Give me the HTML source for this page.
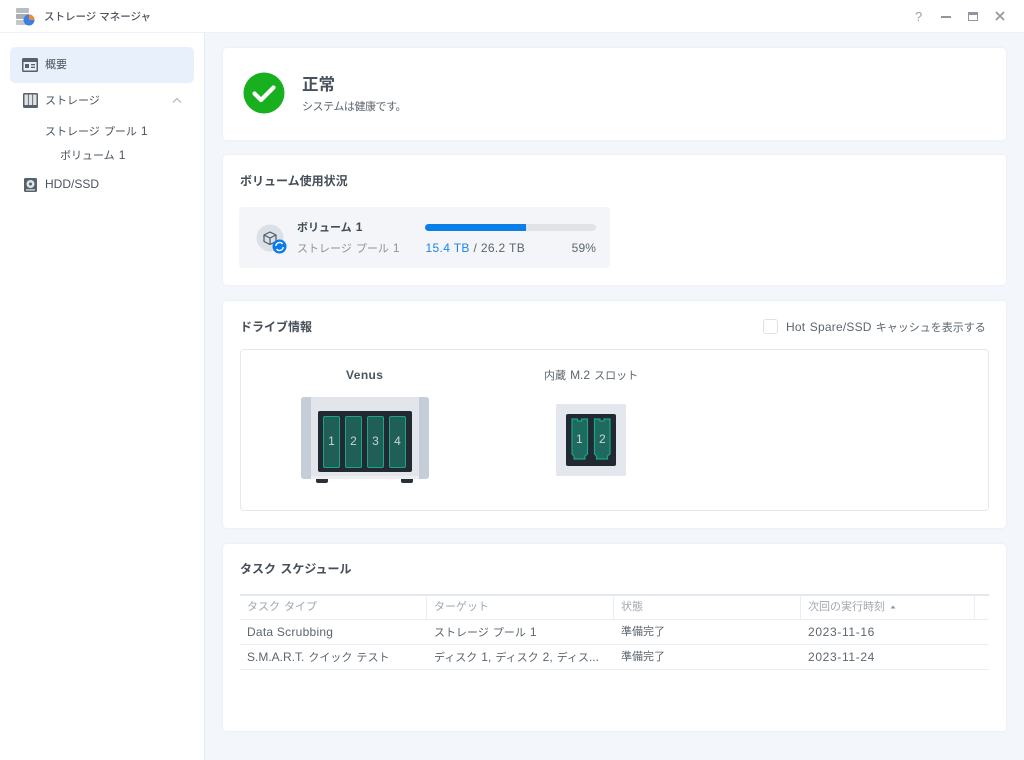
<!DOCTYPE html>
<html lang="ja"><head><meta charset="utf-8"><title>ストレージ マネージャ</title>
<style>
*{box-sizing:border-box}
html,body{margin:0;padding:0}
body{width:1024px;height:760px;overflow:hidden;position:relative;background:#f3f6fa;font-family:"Liberation Sans","Noto Sans CJK JP",sans-serif;color:#4a545e;font-size:11px}
.a{position:absolute;white-space:nowrap;line-height:16px;word-spacing:1px}
.a i{font-style:normal;font-size:12px}
.card{position:absolute;left:223px;width:783px;background:#fff;border-radius:4px;box-shadow:0 0 2px rgba(200,210,220,.25)}
.h{font-weight:700;font-size:12px;color:#454f59}
.g{color:#8c949c}
.t{color:#5c666f}
.s{position:absolute;background:#1f5f58;border:1.5px solid #1ca583;border-radius:2px;color:#c9d3d1;text-align:center;font-size:12px}
.hc{color:#a0a7ae}
.l{position:absolute;background:#e8eef3}
svg{position:absolute;display:block}
</style></head><body>
<div style="position:absolute;left:0;top:0;width:1024px;height:33px;background:#fff;border-bottom:1px solid #eef2f6"></div>
<div style="position:absolute;left:0;top:33px;width:205px;height:727px;background:#fff;border-right:1px solid #e6ebf1"></div>

<svg style="left:15px;top:7px" width="21" height="20" viewBox="0 0 21 20"><rect x="1" y="1" width="13" height="5" rx="1" fill="#b9bdbf"/><rect x="1" y="7" width="13" height="5" rx="1" fill="#a9aeb1"/><rect x="1" y="13" width="13" height="5" rx="1" fill="#c3c7c9"/><circle cx="14" cy="13" r="5.5" fill="#3a7fe6"/><path d="M14 13V7.5A5.5 5.5 0 0 1 19.5 13z" fill="#ee8a3a"/></svg>
<div class="a" style="left:44px;top:9px;font-size:10.5px;font-weight:500;color:#4b555f;word-spacing:0">ストレージ マネージャ</div>

<div class="a" style="left:915px;top:9px;font-size:13px;color:#9aa1a8">?</div>
<div style="position:absolute;left:941px;top:16px;width:10px;height:1.5px;background:#8f969d"></div>
<div style="position:absolute;left:968px;top:12px;width:10px;height:9px;border:1px solid #8f969d;border-top:3px solid #8f969d"></div>
<svg style="left:995px;top:11px" width="10" height="10" viewBox="0 0 10 10"><path d="M1 1L9 9M9 1L1 9" stroke="#8f969d" stroke-width="1.6"/></svg>

<div style="position:absolute;left:10px;top:47px;width:184px;height:36px;background:#e8f1fb;border-radius:5px"></div>
<svg style="left:22px;top:58px" width="16" height="14" viewBox="0 0 16 14"><rect width="16" height="14" rx="1.5" fill="#56616b"/><rect x="1.5" y="4" width="13" height="8.5" fill="#e8f1fb"/><rect x="3" y="6" width="4" height="4" fill="#56616b"/><rect x="9" y="6" width="4" height="1.3" fill="#56616b"/><rect x="9" y="8.7" width="4" height="1.3" fill="#56616b"/></svg>
<div class="a" style="left:45px;top:57px">概要</div>
<svg style="left:23px;top:93px" width="15" height="15" viewBox="0 0 15 15"><rect width="15" height="15" rx="1.5" fill="#56616b"/><rect x="1.5" y="1.5" width="3.4" height="10.5" fill="#dfe3e7"/><rect x="5.8" y="1.5" width="3.4" height="10.5" fill="#dfe3e7"/><rect x="10.1" y="1.5" width="3.4" height="10.5" fill="#dfe3e7"/></svg>
<div class="a" style="left:45px;top:93px">ストレージ</div>
<svg style="left:172px;top:97px" width="10" height="7" viewBox="0 0 10 7"><path d="M1 5.5L5 1.5L9 5.5" fill="none" stroke="#aab1b8" stroke-width="1.1"/></svg>
<div class="a" style="left:45px;top:123px">ストレージ プール <i>1</i></div>
<div class="a" style="left:60px;top:147px">ボリューム <i>1</i></div>
<svg style="left:24px;top:178px" width="13" height="14" viewBox="0 0 13 14"><rect width="13" height="14" rx="1.5" fill="#56616b"/><circle cx="6.5" cy="6" r="4" fill="#dfe3e7"/><circle cx="6.5" cy="6" r="1.5" fill="#56616b"/><rect x="2" y="11.3" width="9" height="1.2" fill="#dfe3e7"/></svg>
<div class="a" style="left:45px;top:176px;font-size:12px">HDD/SSD</div>

<div class="card" style="top:48px;height:92px"></div>
<svg style="left:243px;top:72px" width="42" height="42" viewBox="0 0 42 42"><circle cx="21" cy="21" r="20.5" fill="#19b01f"/><path d="M11.5 21.5L18 28L30.5 15.5" fill="none" stroke="#fff" stroke-width="4.2" stroke-linecap="round" stroke-linejoin="round"/></svg>
<div class="a" style="left:302px;top:74px;font-size:16.5px;line-height:22px;font-weight:700;color:#48525c">正常</div>
<div class="a t" style="left:302px;top:99px;letter-spacing:-.45px">システムは健康です。</div>

<div class="card" style="top:155px;height:130px"></div>
<div class="a h" style="left:240px;top:173px">ボリューム使用状況</div>
<div style="position:absolute;left:239px;top:207px;width:371px;height:61px;background:#f3f5f8;border-radius:4px"></div>
<svg style="left:256px;top:224px" width="32" height="32" viewBox="0 0 32 32"><circle cx="14" cy="14" r="13.5" fill="#dbe0e7"/><path d="M14 8L20 11V17.5L14 20.5L8 17.5V11ZM8 11L14 14L20 11M14 14V20.5" fill="none" stroke="#4e5962" stroke-width="1.2" stroke-linejoin="round"/><circle cx="23.5" cy="22.5" r="7" fill="#0b7bea"/><path d="M19.8 22a3.8 3.8 0 0 1 6.8-2M27.2 23a3.8 3.8 0 0 1-6.8 2" fill="none" stroke="#fff" stroke-width="1.4"/></svg>
<div class="a" style="left:297px;top:219px;font-weight:700;color:#414b55">ボリューム <i>1</i></div>
<div class="a g" style="left:297px;top:240px">ストレージ プール <i>1</i></div>
<div style="position:absolute;left:425px;top:224px;width:171px;height:7px;background:#e0e4e9;border-radius:3.5px"></div>
<div style="position:absolute;left:425px;top:224px;width:101px;height:7px;background:#0b7fe8;border-radius:3.5px 0 0 3.5px"></div>
<div class="a t" style="left:425.5px;top:240px;font-size:12px;letter-spacing:.35px;word-spacing:0"><span style="color:#1a85ec">15.4 TB</span> / 26.2 TB</div>
<div class="a t" style="right:428px;top:240px;font-size:12px;letter-spacing:.1px">59%</div>

<div class="card" style="top:301px;height:227px"></div>
<div class="a h" style="left:240px;top:319px">ドライブ情報</div>
<div style="position:absolute;left:763px;top:319px;width:15px;height:15px;border:1px solid #dbe2e9;border-radius:3px;background:#fff"></div>
<div class="a t" style="left:786px;top:319px"><i style="letter-spacing:.2px">Hot Spare/SSD</i> キャッシュを表示する</div>
<div style="position:absolute;left:240px;top:349px;width:749px;height:162px;border:1px solid #e3e9ef;border-radius:4px"></div>
<div class="a" style="left:346px;top:367px;font-size:12px;font-weight:700;letter-spacing:.4px;color:#4b555f">Venus</div>
<div class="a t" style="left:544px;top:367px">内蔵 <i>M.2</i> スロット</div>

<div style="position:absolute;left:316px;top:478px;width:12px;height:5px;background:#2a3138;border-radius:0 0 2px 2px"></div>
<div style="position:absolute;left:401px;top:478px;width:12px;height:5px;background:#2a3138;border-radius:0 0 2px 2px"></div>
<div style="position:absolute;left:301px;top:397px;width:128px;height:82px;background:#e2e5ea;border-radius:3px;overflow:hidden">
<div style="position:absolute;left:0;top:0;width:10px;height:82px;background:#c5ced8"></div>
<div style="position:absolute;right:0;top:0;width:10px;height:82px;background:#c5ced8"></div>
<div style="position:absolute;left:10px;bottom:0;width:108px;height:3px;background:#eceef1"></div>
</div>
<div style="position:absolute;left:318px;top:411px;width:94px;height:61px;background:#212a33;border-radius:2px"></div>
<div class="s" style="left:323px;top:416px;width:17px;height:52px;line-height:49px">1</div>
<div class="s" style="left:345px;top:416px;width:17px;height:52px;line-height:49px">2</div>
<div class="s" style="left:367px;top:416px;width:17px;height:52px;line-height:49px">3</div>
<div class="s" style="left:389px;top:416px;width:17px;height:52px;line-height:49px">4</div>

<div style="position:absolute;left:556px;top:404px;width:70px;height:72px;background:#e4e7ee;border-radius:2px"></div>
<div style="position:absolute;left:566px;top:414px;width:50px;height:52px;background:#212a33;border-radius:2px"></div>
<svg style="left:571px;top:418px" width="40" height="44" viewBox="0 0 40 44"><g fill="#1f6a60" stroke="#1ca583" stroke-width="1.2"><path d="M1 1H6.5V3H10.5V1H16.5V36L14 38V41H3V38L1 36Z"/><path d="M23.5 1H29V3H33V1H39V36L36.5 38V41H25.5V38L23.5 36Z"/></g></svg>
<div class="a" style="left:576px;top:431px;font-size:12px;color:#c9d3d1">1</div>
<div class="a" style="left:599px;top:431px;font-size:12px;color:#c9d3d1">2</div>

<div class="card" style="top:544px;height:187px"></div>
<div class="a h" style="left:240px;top:561px">タスク スケジュール</div>
<div class="l" style="left:240px;top:594px;width:749px;height:1.5px;background:#e3e9ef"></div>
<div class="l" style="left:240px;top:619px;width:749px;height:1px"></div>
<div class="l" style="left:240px;top:644px;width:749px;height:1px"></div>
<div class="l" style="left:240px;top:669px;width:749px;height:1px"></div>
<div class="l" style="left:426px;top:595px;width:1px;height:24px"></div>
<div class="l" style="left:613px;top:595px;width:1px;height:24px"></div>
<div class="l" style="left:800px;top:595px;width:1px;height:24px"></div>
<div class="l" style="left:974px;top:595px;width:1px;height:24px"></div>

<div class="a hc" style="left:247px;top:599px">タスク タイプ</div>
<div class="a hc" style="left:434px;top:599px">ターゲット</div>
<div class="a hc" style="left:621px;top:599px">状態</div>
<div class="a hc" style="left:808px;top:599px">次回の実行時刻</div>
<svg style="left:890px;top:605px" width="6" height="4" viewBox="0 0 6 4"><path d="M3 .5L5.5 3.5H.5z" fill="#8c949c"/></svg>

<div class="a t" style="left:247px;top:624px;font-size:12px;letter-spacing:.25px;word-spacing:0">Data Scrubbing</div>
<div class="a t" style="left:434px;top:624px">ストレージ プール <i>1</i></div>
<div class="a t" style="left:621px;top:624px">準備完了</div>
<div class="a t" style="left:808px;top:624px;font-size:12px;letter-spacing:.65px">2023-11-16</div>
<div class="a t" style="left:247px;top:649px"><i>S.M.A.R.T.</i> クイック テスト</div>
<div class="a t" style="left:434px;top:649px">ディスク <i>1,</i> ディスク <i>2,</i> ディス<i>...</i></div>
<div class="a t" style="left:621px;top:649px">準備完了</div>
<div class="a t" style="left:808px;top:649px;font-size:12px;letter-spacing:.65px">2023-11-24</div>
</body></html>
